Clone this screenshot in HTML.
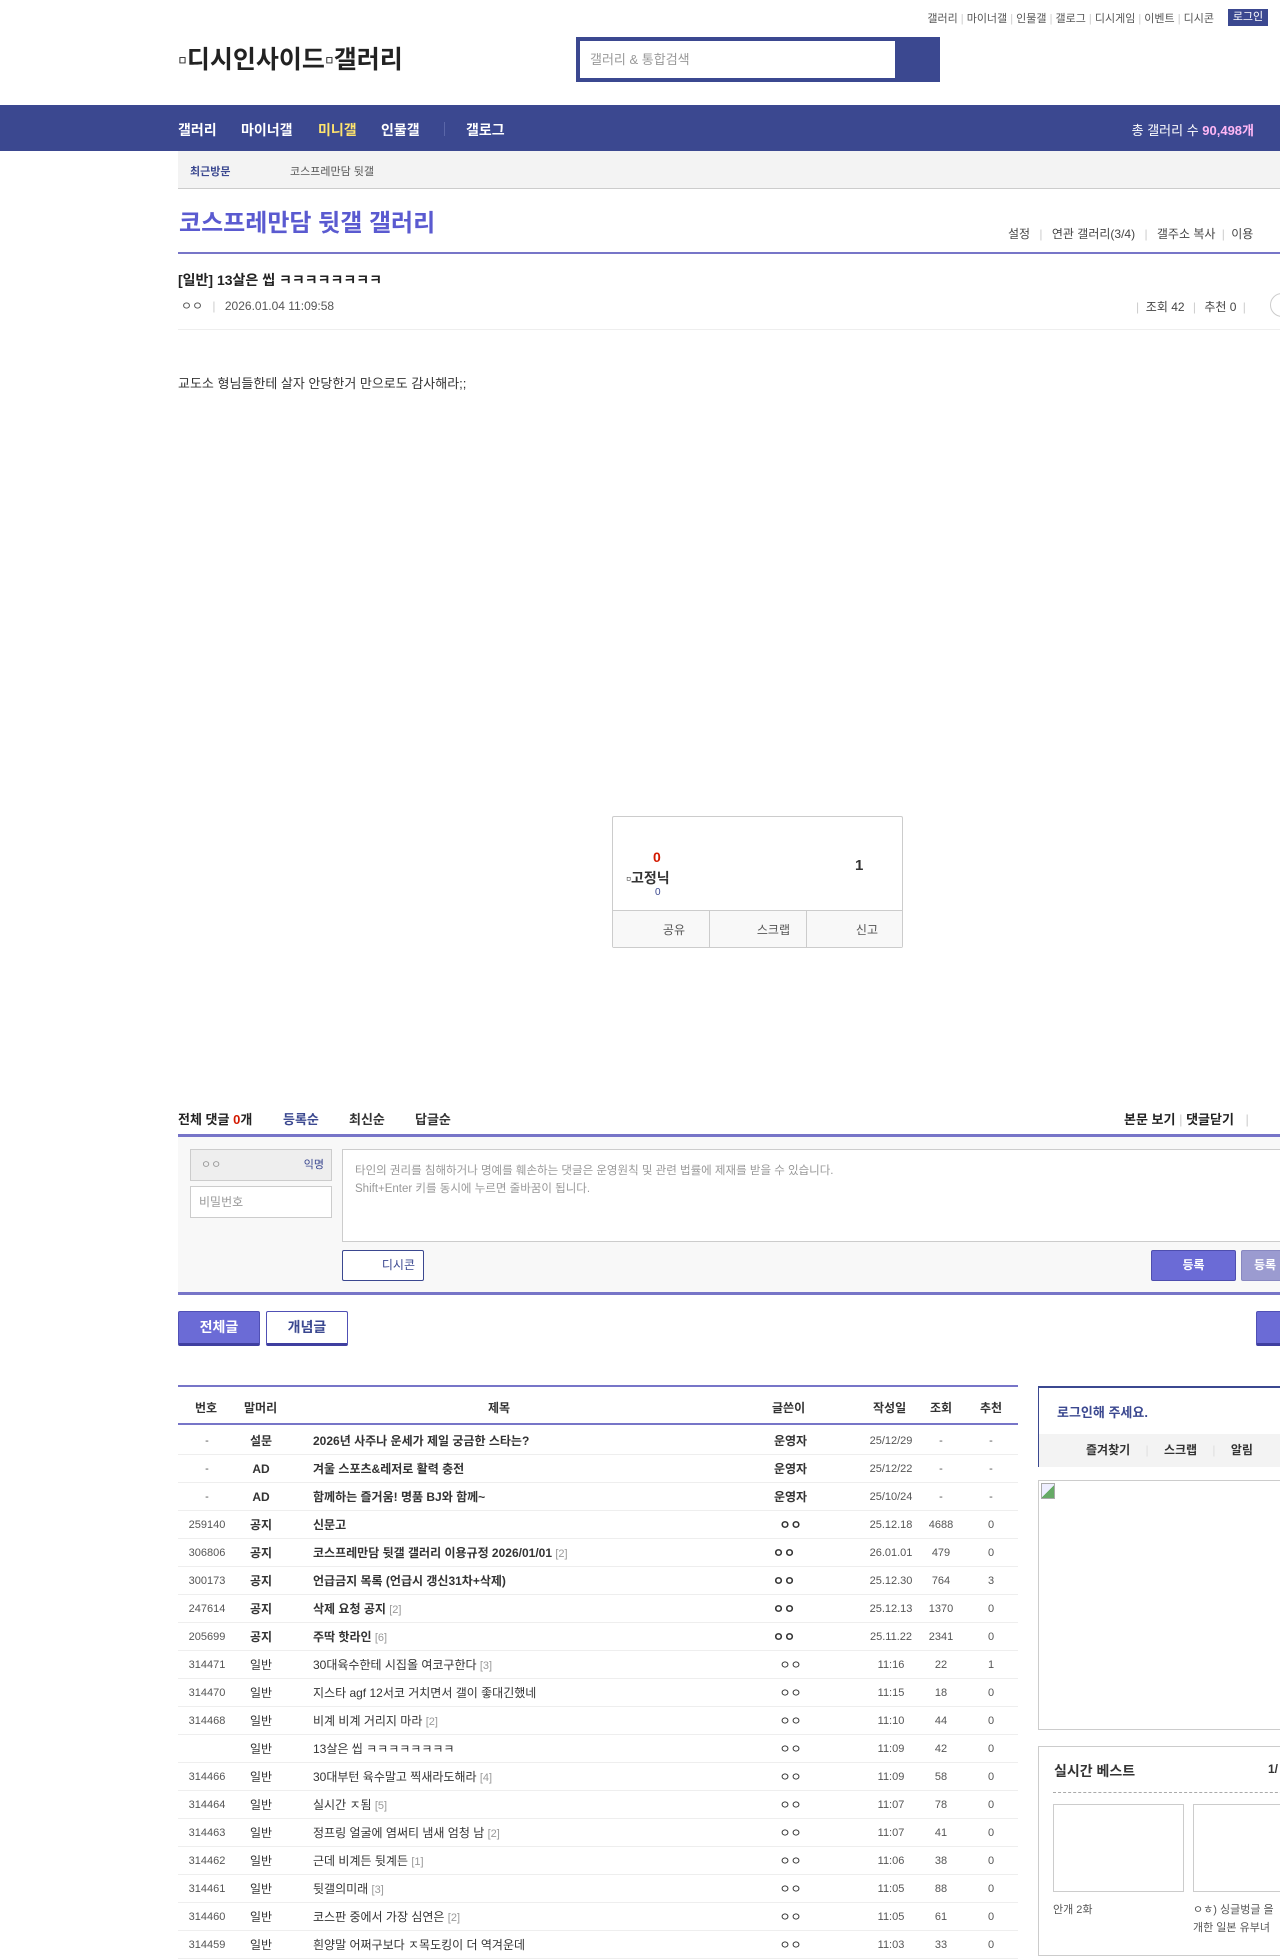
<!DOCTYPE html>
<html><head><meta charset="utf-8">
<style>
*{margin:0;padding:0;box-sizing:border-box}
body{width:1280px;height:1947px;overflow:hidden;position:relative;background:#fff;font-family:"Liberation Sans","Noto Sans CJK KR",sans-serif;color:#333;font-size:12px}
.a{position:absolute;white-space:nowrap}
.toplinks{top:10px;right:66px;font-size:11px;color:#555}
.toplinks i{color:#ccc;font-style:normal}
.login{top:9px;left:1228px;width:40px;height:17px;background:#3b4890;color:#fff;font-size:11px;text-align:center;line-height:17px}
.nav{top:105px;left:0;width:1280px;height:46px;background:#3b4890}
.nav .a{top:15px;font-size:14px;font-weight:bold;color:#fff}
.sub{top:151px;left:178px;width:1102px;height:38px;background:#f3f3f3;border-bottom:1px solid #ccc}
.row{position:absolute;left:178px;width:840px;height:28px;border-bottom:1px solid #eee;font-size:12px}
.row div{position:absolute;top:0;line-height:28px;white-space:nowrap}
.c1{left:0;width:58px;text-align:center;font-size:11px;color:#555}
.c2{left:62px;width:42px;text-align:center}
.c3{left:135px}
.c4{left:570px;width:85px;text-align:center}
.c5{left:690px;width:46px;text-align:center;font-size:11px;color:#555}
.c6{left:740px;width:46px;text-align:center;font-size:11px;color:#555}
.c7{left:790px;width:46px;text-align:center;font-size:11px;color:#555}
.b div{font-weight:bold}
.b .c1,.b .c5,.b .c6,.b .c7{font-weight:normal}
.cn{color:#999;font-size:11px;font-weight:normal}
</style></head><body>
<div class="a toplinks">갤러리 <i>|</i> 마이너갤 <i>|</i> 인물갤 <i>|</i> 갤로그 <i>|</i> 디시게임 <i>|</i> 이벤트 <i>|</i> 디시콘</div>
<div class="a login">로그인</div>
<div class="a" style="top:40px;left:178px;font-size:25px;font-weight:bold;color:#222">▫디시인사이드▫갤러리</div>
<div class="a" style="top:37px;left:576px;width:364px;height:45px;background:#3b4890"></div>
<div class="a" style="top:41px;left:580px;width:315px;height:37px;background:#fff;font-size:13px;color:#999;line-height:37px;padding-left:10px">갤러리 &amp; 통합검색</div>
<div class="a nav">
<div class="a" style="left:178px">갤러리</div>
<div class="a" style="left:241px">마이너갤</div>
<div class="a" style="left:318px;color:#ffe46d">미니갤</div>
<div class="a" style="left:381px">인물갤</div>
<div class="a" style="left:444px;top:17px;width:1px;height:14px;background:#5a66a8"></div>
<div class="a" style="left:466px">갤로그</div>
<div class="a" style="right:26px;font-weight:normal;font-size:13px">총 갤러리 수 <b style="color:#ffb7f5">90,498개</b></div>
</div>
<div class="a sub">
<div class="a" style="left:12px;top:12px;font-size:11px;font-weight:bold;color:#3b4890">최근방문</div>
<div class="a" style="left:112px;top:12px;font-size:11px;color:#555">코스프레만담 뒷갤</div>
</div>
<div class="a" style="top:203px;left:179px;font-size:24px;font-weight:bold;color:#5a5ad0">코스프레만담 뒷갤 갤러리</div>
<div class="a" style="top:225px;left:1008px;font-size:12px;color:#444">설정 <span style="color:#ccc;margin:0 6px">|</span> 연관 갤러리(3/4) <span style="color:#ccc;margin:0 6px">|</span> 갤주소 복사 <span style="color:#ccc;margin:0 3px">|</span> 이용</div>
<div class="a" style="top:252px;left:178px;width:1102px;height:2px;background:#7775c8"></div>
<div class="a" style="top:270px;left:178px;font-size:14px;font-weight:bold;color:#222">[일반] 13살은 씹 ㅋㅋㅋㅋㅋㅋㅋㅋ</div>
<div class="a" style="top:297px;left:181px;font-size:12px;color:#555">ㅇㅇ <span style="color:#ccc;margin:0 6px">|</span> 2026.01.04 11:09:58</div>
<div class="a" style="top:298px;left:1136px;font-size:12px;color:#444"><span style="color:#ccc">|</span> &nbsp;조회 42 <span style="color:#ccc;margin:0 5px">|</span> 추천 0 <span style="color:#ccc;margin:0 3px">|</span></div>
<div class="a" style="top:293px;left:1270px;width:24px;height:24px;border:1px solid #ccc;border-radius:50%"></div>
<div class="a" style="top:329px;left:178px;width:1102px;height:1px;background:#eee"></div>
<div class="a" style="top:373px;left:178px;font-size:13px;color:#333">교도소 형님들한테 살자 안당한거 만으로도 감사해라;;</div>

<div class="a" style="top:816px;left:612px;width:291px;height:132px;border:1px solid #ccc;border-radius:2px">
<div class="a" style="top:32px;left:40px;font-size:14px;font-weight:bold;color:#d31900">0</div>
<div class="a" style="top:51px;left:13px;font-size:14px;font-weight:bold;color:#333">▫고정닉</div>
<div class="a" style="top:70px;left:42px;font-size:10px;color:#3b4890">0</div>
<div class="a" style="top:40px;left:242px;font-size:15px;font-weight:bold;color:#333">1</div>
<div class="a" style="top:93px;left:0;width:289px;height:37px;background:#f8f8f8;border-top:1px solid #ccc;font-size:12px;color:#555">
<div class="a" style="left:0;width:97px;height:36px;border-right:1px solid #ccc;line-height:38px;text-align:right;padding-right:24px">공유</div>
<div class="a" style="left:97px;width:97px;height:36px;border-right:1px solid #ccc;line-height:38px;text-align:right;padding-right:16px">스크랩</div>
<div class="a" style="left:194px;width:95px;height:36px;line-height:38px;text-align:right;padding-right:24px">신고</div>
</div></div>

<div class="a" style="top:1109px;left:178px;font-size:13px;font-weight:bold;color:#222">전체 댓글 <span style="color:#d31900">0</span>개</div>
<div class="a" style="top:1109px;left:283px;font-size:13px;font-weight:bold;color:#3b4890">등록순</div>
<div class="a" style="top:1109px;left:349px;font-size:13px;font-weight:bold;color:#333">최신순</div>
<div class="a" style="top:1109px;left:415px;font-size:13px;font-weight:bold;color:#333">답글순</div>
<div class="a" style="top:1109px;left:1124px;font-size:13px;font-weight:bold;color:#222">본문 보기 <span style="color:#ccc;font-weight:normal">|</span> 댓글닫기 <span style="color:#ccc;font-weight:normal;margin-left:8px">|</span></div>
<div class="a" style="top:1134px;left:178px;width:1102px;height:161px;background:#f8f8f8;border-top:3px solid #7775c8;border-bottom:3px solid #7775c8"></div>
<div class="a" style="top:1149px;left:190px;width:142px;height:32px;background:#eee;border:1px solid #ccc;font-size:11px;color:#999;line-height:30px;padding-left:10px">ㅇㅇ<span style="position:absolute;right:7px;color:#3b4890">익명</span></div>
<div class="a" style="top:1186px;left:190px;width:142px;height:32px;background:#fff;border:1px solid #ccc;font-size:12px;color:#999;line-height:30px;padding-left:8px">비밀번호</div>
<div class="a" style="top:1149px;left:342px;width:950px;height:93px;background:#fff;border:1px solid #ccc;font-size:11.5px;color:#999;padding:12px 12px;line-height:18px">타인의 권리를 침해하거나 명예를 훼손하는 댓글은 운영원칙 및 관련 법률에 제재를 받을 수 있습니다.<br>Shift+Enter 키를 동시에 누르면 줄바꿈이 됩니다.</div>
<div class="a" style="top:1250px;left:342px;width:82px;height:31px;background:#fff;border:1px solid #3b4890;border-radius:2px;font-size:12px;color:#3b4890;line-height:29px;text-align:right;padding-right:8px">디시콘</div>
<div class="a" style="top:1250px;left:1151px;width:85px;height:31px;background:#6b6bd6;border:1px solid #4e4eaf;border-radius:2px;font-size:12px;color:#fff;line-height:29px;text-align:center;font-weight:bold">등록</div>
<div class="a" style="top:1250px;left:1241px;width:85px;height:31px;background:#9b9bd0;border:1px solid #8888c0;border-radius:2px;font-size:12px;color:#fff;line-height:29px;padding-left:12px;font-weight:bold">등록</div>
<div class="a" style="top:1311px;left:178px;width:82px;height:35px;background:#6b6bd6;border:1px solid #5050b5;border-bottom:3px solid #3f3fa0;border-radius:2px;font-size:14px;font-weight:bold;color:#fff;text-align:center;line-height:30px">전체글</div>
<div class="a" style="top:1311px;left:266px;width:82px;height:35px;background:#fff;border:1px solid #5050b5;border-bottom:3px solid #3f3fa0;border-radius:2px;font-size:14px;font-weight:bold;color:#3b4890;text-align:center;line-height:30px">개념글</div>
<div class="a" style="top:1311px;left:1256px;width:60px;height:35px;background:#6b6bd6;border:1px solid #5050b5;border-bottom:3px solid #3f3fa0;border-radius:2px"></div>

<div class="a" style="top:1385px;left:178px;width:840px;height:40px;border-top:2px solid #7775c8;border-bottom:2px solid #7775c8;font-size:12px;font-weight:bold;color:#333">
<div class="a" style="top:12px;left:17px">번호</div>
<div class="a" style="top:12px;left:66px">말머리</div>
<div class="a" style="top:12px;left:310px">제목</div>
<div class="a" style="top:12px;left:594px">글쓴이</div>
<div class="a" style="top:12px;left:695px">작성일</div>
<div class="a" style="top:12px;left:752px">조회</div>
<div class="a" style="top:12px;left:802px">추천</div>
</div>

<div class="row b" style="top:1427px"><div class="c1">-</div><div class="c2">설문</div><div class="c3">2026년 사주나 운세가 제일 궁금한 스타는?</div><div class="c4">운영자</div><div class="c5">25/12/29</div><div class="c6">-</div><div class="c7">-</div></div>
<div class="row b" style="top:1455px"><div class="c1">-</div><div class="c2">AD</div><div class="c3">겨울 스포츠&amp;레저로 활력 충전</div><div class="c4">운영자</div><div class="c5">25/12/22</div><div class="c6">-</div><div class="c7">-</div></div>
<div class="row b" style="top:1483px"><div class="c1">-</div><div class="c2">AD</div><div class="c3">함께하는 즐거움! 명품 BJ와 함께~</div><div class="c4">운영자</div><div class="c5">25/10/24</div><div class="c6">-</div><div class="c7">-</div></div>
<div class="row b" style="top:1511px"><div class="c1">259140</div><div class="c2">공지</div><div class="c3">신문고</div><div class="c4">ㅇㅇ</div><div class="c5">25.12.18</div><div class="c6">4688</div><div class="c7">0</div></div>
<div class="row b" style="top:1539px"><div class="c1">306806</div><div class="c2">공지</div><div class="c3">코스프레만담 뒷갤 갤러리 이용규정 2026/01/01 <span class="cn">[2]</span></div><div class="c4" style="width:72px">ㅇㅇ</div><div class="c5">26.01.01</div><div class="c6">479</div><div class="c7">0</div></div>
<div class="row b" style="top:1567px"><div class="c1">300173</div><div class="c2">공지</div><div class="c3">언급금지 목록 (언급시 갱신31차+삭제)</div><div class="c4" style="width:72px">ㅇㅇ</div><div class="c5">25.12.30</div><div class="c6">764</div><div class="c7">3</div></div>
<div class="row b" style="top:1595px"><div class="c1">247614</div><div class="c2">공지</div><div class="c3">삭제 요청 공지 <span class="cn">[2]</span></div><div class="c4" style="width:72px">ㅇㅇ</div><div class="c5">25.12.13</div><div class="c6">1370</div><div class="c7">0</div></div>
<div class="row b" style="top:1623px"><div class="c1">205699</div><div class="c2">공지</div><div class="c3">주딱 핫라인 <span class="cn">[6]</span></div><div class="c4" style="width:72px">ㅇㅇ</div><div class="c5">25.11.22</div><div class="c6">2341</div><div class="c7">0</div></div>
<div class="row" style="top:1651px"><div class="c1">314471</div><div class="c2">일반</div><div class="c3">30대육수한테 시집올 여코구한다 <span class="cn">[3]</span></div><div class="c4">ㅇㅇ</div><div class="c5">11:16</div><div class="c6">22</div><div class="c7">1</div></div>
<div class="row" style="top:1679px"><div class="c1">314470</div><div class="c2">일반</div><div class="c3">지스타 agf 12서코 거치면서 갤이 좋대긴했네</div><div class="c4">ㅇㅇ</div><div class="c5">11:15</div><div class="c6">18</div><div class="c7">0</div></div>
<div class="row" style="top:1707px"><div class="c1">314468</div><div class="c2">일반</div><div class="c3">비계 비계 거리지 마라 <span class="cn">[2]</span></div><div class="c4">ㅇㅇ</div><div class="c5">11:10</div><div class="c6">44</div><div class="c7">0</div></div>
<div class="row" style="top:1735px"><div class="c1"></div><div class="c2">일반</div><div class="c3">13살은 씹 ㅋㅋㅋㅋㅋㅋㅋㅋ</div><div class="c4">ㅇㅇ</div><div class="c5">11:09</div><div class="c6">42</div><div class="c7">0</div></div>
<div class="row" style="top:1763px"><div class="c1">314466</div><div class="c2">일반</div><div class="c3">30대부턴 육수말고 찍새라도해라 <span class="cn">[4]</span></div><div class="c4">ㅇㅇ</div><div class="c5">11:09</div><div class="c6">58</div><div class="c7">0</div></div>
<div class="row" style="top:1791px"><div class="c1">314464</div><div class="c2">일반</div><div class="c3">실시간 ㅈ됨 <span class="cn">[5]</span></div><div class="c4">ㅇㅇ</div><div class="c5">11:07</div><div class="c6">78</div><div class="c7">0</div></div>
<div class="row" style="top:1819px"><div class="c1">314463</div><div class="c2">일반</div><div class="c3">정프링 얼굴에 염써티 냄새 엄청 남 <span class="cn">[2]</span></div><div class="c4">ㅇㅇ</div><div class="c5">11:07</div><div class="c6">41</div><div class="c7">0</div></div>
<div class="row" style="top:1847px"><div class="c1">314462</div><div class="c2">일반</div><div class="c3">근데 비계든 뒷계든 <span class="cn">[1]</span></div><div class="c4">ㅇㅇ</div><div class="c5">11:06</div><div class="c6">38</div><div class="c7">0</div></div>
<div class="row" style="top:1875px"><div class="c1">314461</div><div class="c2">일반</div><div class="c3">뒷갤의미래 <span class="cn">[3]</span></div><div class="c4">ㅇㅇ</div><div class="c5">11:05</div><div class="c6">88</div><div class="c7">0</div></div>
<div class="row" style="top:1903px"><div class="c1">314460</div><div class="c2">일반</div><div class="c3">코스판 중에서 가장 심연은 <span class="cn">[2]</span></div><div class="c4">ㅇㅇ</div><div class="c5">11:05</div><div class="c6">61</div><div class="c7">0</div></div>
<div class="row" style="top:1931px"><div class="c1">314459</div><div class="c2">일반</div><div class="c3">흰양말 어쩌구보다 ㅈ목도킹이 더 역겨운데</div><div class="c4">ㅇㅇ</div><div class="c5">11:03</div><div class="c6">33</div><div class="c7">0</div></div>

<div class="a" style="top:1386px;left:1038px;width:250px;height:81px;border:1px solid #3b4890;border-top-width:2px">
<div class="a" style="top:14px;left:18px;font-size:13px;font-weight:bold;color:#3b4890">로그인해 주세요.</div>
<div class="a" style="top:46px;left:0;width:250px;height:33px;background:#f3f3f3;font-size:12px;font-weight:bold;color:#333;line-height:33px;padding-left:47px">즐겨찾기 <span style="color:#ddd;font-weight:normal;margin:0 12px">|</span> 스크랩 <span style="color:#ddd;font-weight:normal;margin:0 12px">|</span> 알림</div>
</div>
<div class="a" style="top:1480px;left:1038px;width:250px;height:250px;border:1px solid #ccc"><div class="a" style="top:2px;left:2px;width:14px;height:16px;border:1px solid #aaa;background:linear-gradient(135deg,#eef 50%,#6a6 50%)"></div></div>
<div class="a" style="top:1746px;left:1038px;width:250px;height:210px;border:1px solid #ccc">
<div class="a" style="top:14px;left:15px;font-size:14px;font-weight:bold;color:#333">실시간 베스트</div>
<div class="a" style="top:15px;left:229px;font-size:12px;font-weight:bold;color:#333">1/</div>
<div class="a" style="top:45px;left:14px;width:240px;border-top:1px dashed #aaa"></div>
<div class="a" style="top:57px;left:14px;width:131px;height:88px;border:1px solid #ccc"></div>
<div class="a" style="top:57px;left:154px;width:131px;height:88px;border:1px solid #ccc"></div>
<div class="a" style="top:154px;left:14px;font-size:11px;color:#555">안개 2화</div>
<div class="a" style="top:154px;left:154px;font-size:11px;color:#555;line-height:18px">ㅇㅎ) 싱글벙글 을<br>개한 일본 유부녀</div>
</div>
</body></html>
